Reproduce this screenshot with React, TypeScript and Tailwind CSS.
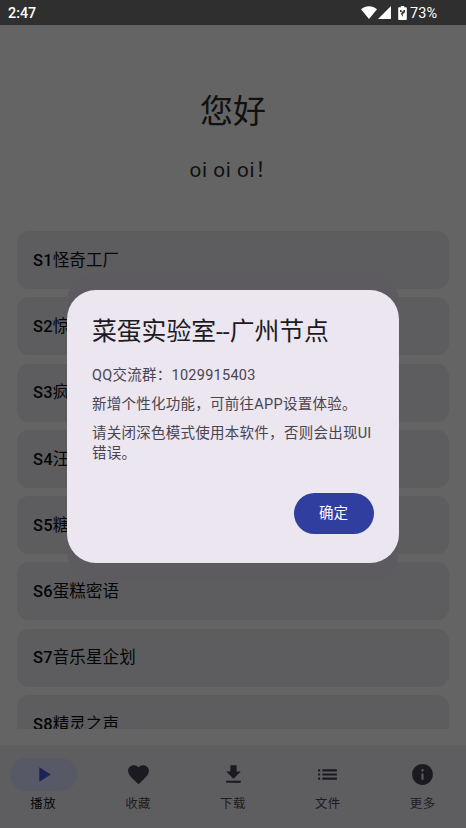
const episodes = [
  ['S1', '怪奇工厂'],
  ['S2', '惊'],
  ['S3', '疯'],
  ['S4', '汪'],
  ['S5', '糖'],
  ['S6', '蛋糕密语'],
  ['S7', '音乐星企划'],
  ['S8', '精灵之声'],
];

const tabs = [
  { label: '播放', path: 'M8 5v14l11-7z' },
  { label: '收藏', path: 'M12 21.35l-1.45-1.32C5.4 15.36 2 12.28 2 8.5 2 5.42 4.42 3 7.5 3c1.74 0 3.41.81 4.5 2.09C13.09 3.81 14.76 3 16.5 3 19.58 3 22 5.42 22 8.5c0 3.78-3.4 6.86-8.55 11.54L12 21.35z' },
  { label: '下载', path: 'M19 9h-4V3H9v6H5l7 7 7-7zM5 18v2h14v-2H5z' },
  { label: '文件', path: 'M3 13h2v-2H3v2zm0 4h2v-2H3v2zm0-8h2V7H3v2zm4 4h14v-2H7v2zm0 4h14v-2H7v2zM7 7v2h14V7H7z' },
  { label: '更多', path: 'M12 2C6.48 2 2 6.48 2 12s4.48 10 10 10 10-4.48 10-10S17.52 2 12 2zm1 15h-2v-6h2v6zm0-8h-2V7h2v2z' },
];

function StatusBar() {
  return (
    <header className="flex h-[25px] shrink-0 items-center justify-between bg-[#2f2f2f] pl-2 pr-[29px] text-[14.3px] leading-[23px] font-medium text-white">
      <span className="pt-[2px]">2:47</span>
      <div className="flex items-center">
        <svg className="h-[13px] w-4" viewBox="0 0 16 13" fill="currentColor"><path d="M0 3.2C4.6-.8 11.4-.8 16 3.2L8 13z" /></svg>
        <svg className="ml-[1px] h-[13px] w-[13px]" viewBox="0 0 13 13" fill="currentColor"><path d="M13 0v13H0z" /></svg>
        <svg className="ml-[7px] h-[14px] w-[9px]" viewBox="0 0 9 14" fill="currentColor">
          <path fillRule="evenodd" d="M2.8 0h3.4v1.3H8c.5 0 .8.4.8.8V13c0 .6-.3 1-.8 1H1c-.5 0-.8-.4-.8-1V2.100c0-.4.3-.8.8-.8h1.800zM2 4v2h1.700v1.200H2.600L4.800 11V7.500H6L7 6V4H5.500v1.500h-2V4z" />
        </svg>
        <span className="ml-[3.5px] pt-[2px] text-[14.5px] font-normal">73%</span>
      </div>
    </header>
  );
}

function Dialog() {
  return (
    <div className="absolute left-[67px] top-[272px] w-[332px] rounded-[30px] bg-[#5d5b60] py-[18px]">
      <div role="dialog" className="flex h-[273px] flex-col rounded-[29px] bg-[#ebe6f0] px-[25px] pt-[25px] pb-[29px]">
        <h2 className="text-[24.8px] leading-[33px] font-normal text-[#1c1b1f]">菜蛋实验室--广州节点</h2>
        <div className="mt-[17.5px] flex flex-col gap-[8.3px] text-[14.5px] leading-[20.7px] tracking-[0.26px] text-[#49454f]">
          <p>QQ交流群：1029915403</p>
          <p>新增个性化功能，可前往APP设置体验。</p>
          <p>请关闭深色模式使用本软件，否则会出现UI错误。</p>
        </div>
        <button className="mt-auto h-[41px] w-20 self-end rounded-full bg-[#303f9f] pr-[1px] text-[14.5px] font-normal tracking-[0.1px] text-white">确定</button>
      </div>
    </div>
  );
}

export default function App() {
  return (
    <div className="relative flex h-[828px] w-[466px] flex-col overflow-hidden bg-[#646464] font-[Roboto,'Noto_Sans_CJK_SC',sans-serif]">
      <StatusBar />
      <div className="flex h-[206px] shrink-0 flex-col items-center text-[#111]">
        <h1 className="mt-[63px] text-[33px] leading-[48px]">您好</h1>
        <p className="mt-[19px] text-[20.7px] leading-[30px] tracking-[0.6px]">oi oi oi！</p>
      </div>
      <main className="flex h-[498px] shrink-0 flex-col gap-[8.3px] overflow-hidden px-[17px]">
        {episodes.map(([code, title]) => (
          <div key={code} className="flex h-[58px] shrink-0 items-center rounded-[12px] bg-[#5d5d60] px-4 pt-[2px] text-[16.5px] tracking-[0.15px] text-[#050505]">
            <span>
              <span className="font-medium">{code}</span>
              {title}
            </span>
          </div>
        ))}
      </main>
      <nav className="mt-4 flex grow justify-between bg-[#5e5e61] px-[10px] pt-[13px]">
        {tabs.map((tab, i) => (
          <div key={tab.label} className="flex w-[66.5px] flex-col items-center">
            <div className={i === 0 ? 'flex h-[33px] w-full items-center justify-center rounded-full bg-[#575a66] text-[#1b2358]' : 'flex h-[33px] w-full items-center justify-center text-[#1b1a20]'}>
              <svg className="h-[25px] w-[25px]" viewBox="0 0 24 24" fill="currentColor"><path d={tab.path} /></svg>
            </div>
            <span className={i === 0 ? 'mt-[3.5px] text-[12.4px] leading-[17px] tracking-[0.5px] text-[#050507]' : 'mt-[3.5px] text-[12.4px] leading-[17px] tracking-[0.5px] text-[#1d1b20]'}>{tab.label}</span>
          </div>
        ))}
      </nav>
      <Dialog />
    </div>
  );
}
